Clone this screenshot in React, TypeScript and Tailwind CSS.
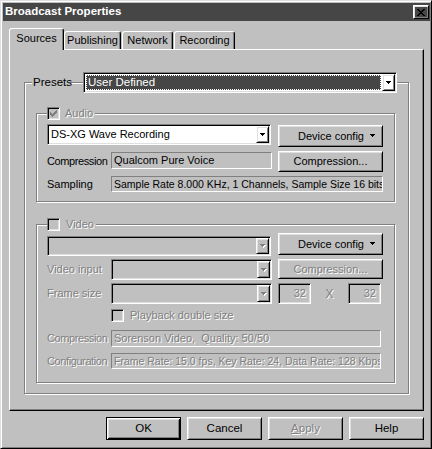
import React from 'react';

const raised =
	'border border-t-white border-l-white border-r-black border-b-black shadow-[inset_1px_1px_0_#dfdfdf,inset_-1px_-1px_0_#808080]';
const sunken =
	'border border-t-[#808080] border-l-[#808080] border-r-white border-b-white shadow-[inset_1px_1px_0_#000,inset_-1px_-1px_0_#dfdfdf]';
const staticEdge = 'border border-t-[#808080] border-l-[#808080] border-r-white border-b-white';
const etched = 'border border-[#808080] shadow-[1px_1px_0_#fff,inset_1px_1px_0_#fff]';
const dim = 'text-[#808080] [text-shadow:1px_1px_0_#fff]';

const Arrow = ({ disabled }: { disabled?: boolean }) => (
	<svg width="6" height="4" viewBox="0 0 6 4" className="block">
		{disabled && <path d="M1 1h5v1H1z M2 2h3v1H2z M3 3h1v1H3z" fill="#fff" />}
		<path d="M0 0h5v1H0z M1 1h3v1H1z M2 2h1v1H2z" fill={disabled ? '#808080' : '#000'} />
	</svg>
);

const Combo = ({ text, disabled, className = '' }: { text?: string; disabled?: boolean; className?: string }) => (
	<div className={`${sunken} ${disabled ? 'bg-[#c0c0c0]' : 'bg-white'} flex p-[1px] shrink-0 ${className}`}>
		<div className="flex-1 flex items-center pl-[2px] overflow-hidden whitespace-nowrap">{text}</div>
		<div className={`${raised} w-[13px] flex items-center justify-center`}>
			<Arrow disabled={disabled} />
		</div>
	</div>
);

const Check = ({ checked, disabled }: { checked?: boolean; disabled?: boolean }) => (
	<div
		className={`${sunken} w-[13px] h-[13px] shrink-0 flex items-center justify-center ${
			disabled ? 'bg-[#c0c0c0]' : 'bg-white'
		}`}
	>
		{checked && (
			<svg width="7" height="7" viewBox="0 0 7 7" className="block">
				<path
					d="M6 0h1v1H6z M5 1h2v1H5z M0 2h1v1H0z M4 2h3v1H4z M0 3h2v1H0z M3 3h3v1H3z M0 4h5v1H0z M1 5h3v1H1z M2 6h1v1H2z"
					fill={disabled ? '#808080' : '#000'}
				/>
			</svg>
		)}
	</div>
);

const Btn = ({ children, className = '' }: { children: React.ReactNode; className?: string }) => (
	<div className={`${raised} flex items-center justify-center shrink-0 ${className}`}>{children}</div>
);

const DeviceConfig = () => (
	<Btn className="w-[105px] h-[22px] ml-[7px] !justify-end pr-[6px]">
		<span>Device config</span>
		<span className="ml-[6px]">
			<Arrow />
		</span>
	</Btn>
);

const Tab = ({ label, active, className = '' }: { label: string; active?: boolean; className?: string }) => (
	<div
		className={`bg-[#c0c0c0] border-t border-l border-t-white border-l-white border-r border-r-black rounded-tl-[3px] rounded-tr-[3px] shadow-[inset_-1px_0_0_#808080] flex items-center justify-center shrink-0 ${
			active ? 'h-[22px] pb-[3px]' : 'h-[18px] mb-[1px]'
		} ${className}`}
	>
		{label}
	</div>
);

export default function App() {
	return (
		<div
			className="w-[432px] h-[449px] bg-[#c0c0c0] text-black text-[11px] leading-none border border-t-[#dfdfdf] border-l-[#dfdfdf] border-r-black border-b-black shadow-[inset_1px_1px_0_#fff,inset_-1px_-1px_0_#808080] pt-[2px] pl-[2px] pr-[1px] flex flex-col"
			style={{ fontFamily: '"Liberation Sans", Arial, sans-serif' }}
		>
			{/* title bar */}
			<div className="h-[18px] bg-[#464646] flex items-center justify-between pl-[2px] pr-[1px]">
				<span className="text-white font-bold text-[11.5px]">Broadcast Properties</span>
				<Btn className="w-[16px] h-[14px]">
					<svg width="8" height="7" viewBox="0 0 8 7" className="block">
						<path
							d="M0 0h2v1H0z M6 0h2v1H6z M1 1h2v1H1z M5 1h2v1H5z M2 2h4v1H2z M3 3h2v1H3z M2 4h4v1H2z M1 5h2v1H1z M5 5h2v1H5z M0 6h2v1H0z M6 6h2v1H6z"
							fill="#000"
						/>
					</svg>
				</Btn>
			</div>

			{/* tabs */}
			<div className="mt-[7px] pl-[6px] flex items-end relative z-10">
				<Tab label="Sources" active className="w-[55px]" />
				<Tab label="Publishing" className="w-[57px]" />
				<Tab label="Network" className="w-[51px] ml-[1px]" />
				<Tab label="Recording" className="w-[61px] ml-[1px]" />
			</div>

			{/* tab panel */}
			<div className="-mt-px mx-[6px] h-[362px] border border-t-white border-l-white border-r-black border-b-black shadow-[inset_-1px_-1px_0_#808080] px-[14px] pt-[32px]">
				<div className={`${etched} h-[312px]`}>
					{/* presets header */}
					<div className="-mt-[11px] ml-[7px] h-[21px] flex items-center relative">
						<span className="w-[37px] bg-[#c0c0c0] pl-[1px] leading-[13px] text-[11.5px]">Presets</span>
						<div className={`${sunken} bg-white p-[1px] ml-[14px] w-[314px] h-[21px] flex`}>
							<div className="flex-1 p-[1px] bg-white">
								<div className="h-full bg-[#464646] outline-1 outline-dotted outline-white -outline-offset-1 text-white text-[11.5px] flex items-center pl-[2px]">
									User Defined
								</div>
							</div>
							<div className={`${raised} w-[13px] flex items-center justify-center`}>
								<Arrow />
							</div>
						</div>
					</div>

					{/* audio group */}
					<div className={`${etched} mt-[20px] ml-[11px] mr-[13px] h-[89px] pl-[10px]`}>
						<div className="-mt-[7px] h-[13px] flex items-center">
							<Check checked disabled />
							<span className={`bg-[#c0c0c0] pl-[5px] pr-[2px] ${dim}`}>Audio</span>
						</div>
						<div className="mt-[4px] flex items-start">
							<Combo text="DS-XG Wave Recording" className="w-[224px] h-[21px]" />
							<div className="mt-[1px]">
								<DeviceConfig />
							</div>
						</div>
						<div className="mt-[4px] flex items-start">
							<span className="w-[64px] h-[21px] flex items-center tracking-[-0.4px] whitespace-nowrap">Compression</span>
							<div className={`${staticEdge} w-[161px] h-[17px] mt-[1px] flex items-center pl-[2px]`}>
								Qualcom Pure Voice
							</div>
							<Btn className="w-[105px] h-[21px] ml-[6px]">Compression...</Btn>
						</div>
						<div className="mt-[4px] flex items-center">
							<span className="w-[64px]">Sampling</span>
							<div className={`${staticEdge} w-[272px] h-[16px] flex items-center pl-[2px] overflow-hidden whitespace-nowrap text-[10.5px]`}>
								Sample Rate 8.000 KHz, 1 Channels, Sample Size 16 bits
							</div>
						</div>
					</div>

					{/* video group */}
					<div className={`${etched} mt-[22px] ml-[11px] mr-[13px] h-[159px] pl-[10px]`}>
						<div className="-mt-[7px] h-[13px] flex items-center">
							<Check disabled />
							<span className={`bg-[#c0c0c0] pl-[6px] pr-[2px] ${dim}`}>Video</span>
						</div>
						<div className="mt-[2px] flex items-start">
							<Combo disabled className="w-[224px] h-[20px] mt-[3px]" />
							<DeviceConfig />
						</div>
						<div className="mt-[3px] flex items-start">
							<span className={`w-[64px] h-[21px] flex items-center ${dim}`}>Video input</span>
							<Combo disabled className="w-[161px] h-[21px]" />
							<Btn className={`w-[105px] h-[20px] ml-[6px] ${dim}`}>Compression...</Btn>
						</div>
						<div className="mt-[3px] flex items-center">
							<span className={`w-[64px] ${dim}`}>Frame size</span>
							<Combo disabled className="w-[161px] h-[21px]" />
							<div className={`${sunken} w-[33px] h-[21px] ml-[6px] flex items-center justify-end pr-[4px] ${dim}`}>32</div>
							<span className={`w-[37px] text-center text-[12px] ${dim}`}>X</span>
							<div className={`${sunken} w-[33px] h-[21px] flex items-center justify-end pr-[4px] ${dim}`}>32</div>
						</div>
						<div className="mt-[5px] pl-[64px] flex items-center">
							<Check disabled />
							<span className={`ml-[6px] ${dim}`}>Playback double size</span>
						</div>
						<div className="mt-[8px] flex items-center">
							<span className={`w-[64px] tracking-[-0.4px] whitespace-nowrap ${dim}`}>Compression</span>
							<div className={`${staticEdge} w-[270px] h-[17px] flex items-center pl-[2px] ${dim}`}>
								Sorenson Video,&nbsp; Quality: 50/50
							</div>
						</div>
						<div className="mt-[6px] flex items-center">
							<span className={`w-[64px] tracking-[-0.4px] whitespace-nowrap ${dim}`}>Configuration</span>
							<div className={`${staticEdge} w-[270px] h-[16px] flex items-center pl-[2px] overflow-hidden whitespace-nowrap text-[10.5px] ${dim}`}>
								Frame Rate: 15.0 fps, Key Rate: 24, Data Rate: 128 Kbps
							</div>
						</div>
					</div>
				</div>
			</div>

			{/* dialog buttons */}
			<div className="mt-[6px] pr-[6px] flex justify-end gap-[6px] text-[11.5px]">
				<div className="w-[75px] h-[23px] border border-black bg-[#c0c0c0] shadow-[inset_1px_1px_0_#fff,inset_-1px_-1px_0_#000,inset_2px_2px_0_#dfdfdf,inset_-2px_-2px_0_#808080] flex items-center justify-center">
					OK
				</div>
				<Btn className="w-[75px] h-[23px]">Cancel</Btn>
				<Btn className={`w-[75px] h-[23px] ${dim}`}>
					<span>
						<span className="underline">A</span>pply
					</span>
				</Btn>
				<Btn className="w-[75px] h-[23px]">Help</Btn>
			</div>
		</div>
	);
}
